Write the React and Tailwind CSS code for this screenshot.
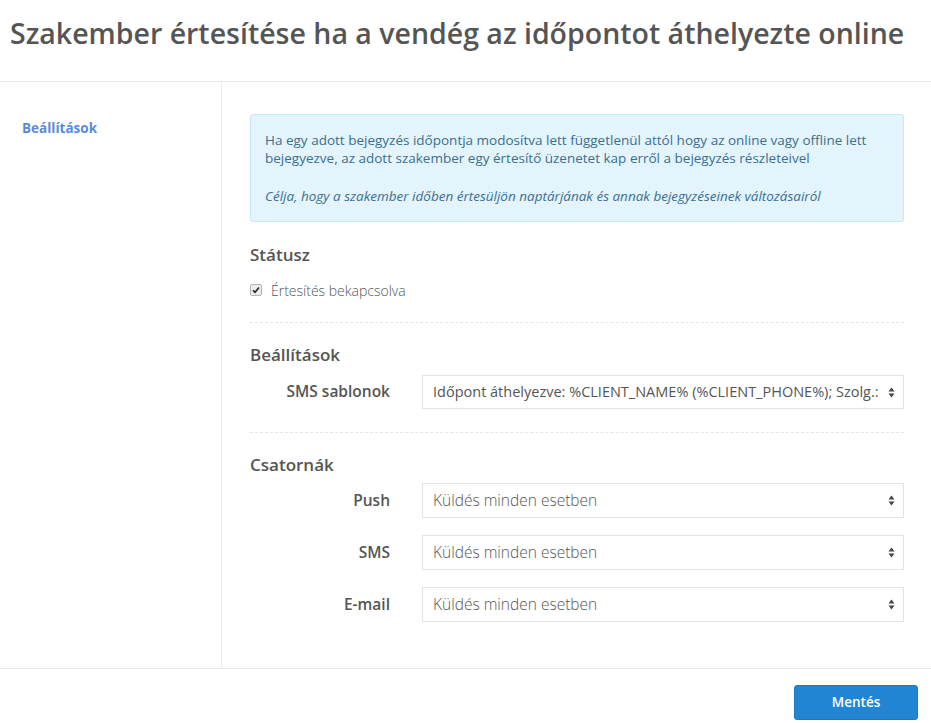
import React from 'react';

const Arrows = () => (
  <svg width="7" height="11" viewBox="0 0 7 11" className="shrink-0">
    <path d="M3.5 0.5 L6.5 4.5 L0.5 4.5 Z" fill="#444" />
    <path d="M3.5 10.5 L6.5 6.5 L0.5 6.5 Z" fill="#444" />
  </svg>
);

const FakeSelect = ({ value }) => (
  <div className="flex-1 min-w-0 h-[35px] border border-[#e3e3e3] bg-white flex items-center pl-[10px] pr-[8px] gap-2">
    <span className="flex-1 truncate text-[15.5px] font-light text-[#555]">{value}</span>
    <Arrows />
  </div>
);

const Row = ({ label, value, className = '' }) => (
  <div className={`flex items-center ${className}`}>
    <div className="w-[140px] text-right text-[15.5px] font-semibold text-[#555]">{label}</div>
    <div className="ml-[32px] flex-1 min-w-0 flex">
      <FakeSelect value={value} />
    </div>
  </div>
);

const App = () => {
  return (
    <div className="w-[931px] h-[723px] bg-white flex flex-col" style={{ fontFamily: '"Open Sans", sans-serif' }}>
      {/* Header */}
      <div className="h-[82px] border-b border-[#e8e8e8] px-[10px] pt-[13px]">
        <h1 className="text-[28.5px] leading-[40px] font-semibold text-[#555] whitespace-nowrap">
          Szakember értesítése ha a vendég az időpontot áthelyezte online
        </h1>
      </div>

      {/* Body */}
      <div className="flex h-[587px] border-b border-[#e8e8e8]">
        <div className="w-[222px] shrink-0 border-r border-[#ececec] pl-[22px] pt-[33px]">
          <a className="text-[13.5px] font-bold text-[#5b8ad8]">Beállítások</a>
        </div>

        <div className="flex-1 min-w-0 pl-[28px] pr-[27px] pt-[32px]">
          <div className="bg-[#e3f4fc] border border-[#c4e9f8] rounded-[3px] px-[14px] pt-[16px] pb-[16px] text-[13.5px] leading-[18px] text-[#3a6f8f]">
            <p>
              Ha egy adott bejegyzés időpontja modosítva lett függetlenül attól hogy az online vagy offline lett bejegyezve, az adott szakember egy értesítő üzenetet kap erről a bejegyzés részleteivel
            </p>
            <p className="mt-[20px] italic">
              Célja, hogy a szakember időben értesüljön naptárjának és annak bejegyzéseinek változásairól
            </p>
          </div>

          <h3 className="mt-[23px] text-[17px] leading-[20px] font-semibold text-[#555]">Státusz</h3>
          <div className="mt-[16px] flex items-center gap-[9px] h-[18px]">
            <span className="w-[12px] h-[12px] rounded-[2px] border border-[#b5b5b5] bg-[#ececec] flex items-center justify-center">
              <svg width="8" height="8" viewBox="0 0 8 8">
                <path d="M1 4.2 L3 6.3 L7 1.5" stroke="#222" strokeWidth="1.6" fill="none" />
              </svg>
            </span>
            <span className="text-[14px] font-light text-[#555]">Értesítés bekapcsolva</span>
          </div>

          <div className="mt-[23px] border-t border-dashed border-[#e6e6e6]" />

          <h3 className="mt-[22px] text-[17px] leading-[20px] font-semibold text-[#555]">Beállítások</h3>
          <div className="mt-[10px] flex items-center">
            <div className="w-[140px] text-right text-[15.5px] font-semibold text-[#555]">SMS sablonok</div>
            <div className="ml-[32px] flex-1 min-w-0 h-[34px] border border-[#e3e3e3] flex items-center pl-[10px] pr-[8px] gap-1">
              <span className="flex-1 min-w-0 overflow-hidden whitespace-nowrap text-[14.5px] text-[#555]">
                Időpont áthelyezve: %CLIENT_NAME% (%CLIENT_PHONE%); Szolg.:
              </span>
              <Arrows />
            </div>
          </div>

          <div className="mt-[23px] border-t border-dashed border-[#e6e6e6]" />

          <h3 className="mt-[22px] text-[17px] leading-[20px] font-semibold text-[#555]">Csatornák</h3>
          <Row className="mt-[8px]" label="Push" value="Küldés minden esetben" />
          <Row className="mt-[17px]" label="SMS" value="Küldés minden esetben" />
          <Row className="mt-[17px]" label="E-mail" value="Küldés minden esetben" />
        </div>
      </div>

      {/* Footer */}
      <div className="flex justify-end pr-[13px] pt-[16px]">
        <button className="w-[124px] h-[35px] rounded-[3px] bg-[#2285d3] border border-[#1c78c0] text-white text-[13.5px] font-semibold">
          Mentés
        </button>
      </div>
    </div>
  );
};

export default App;
